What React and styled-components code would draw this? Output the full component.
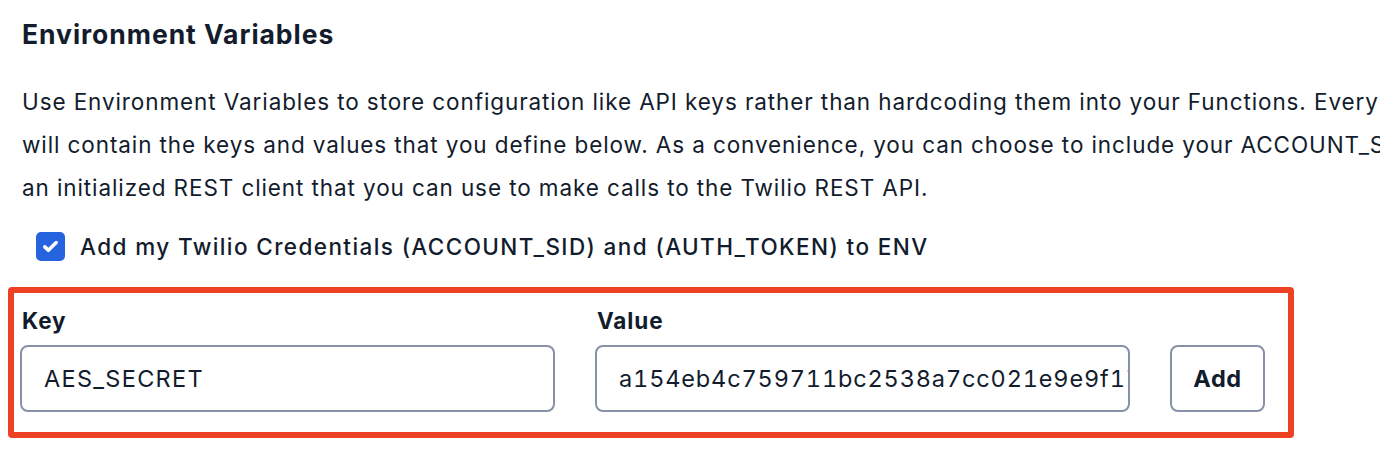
import styled, { createGlobalStyle } from "styled-components";

const GlobalStyle = createGlobalStyle`
  html, body {
    margin: 0;
    padding: 0;
    background: #ffffff;
  }
  body {
    font-family: Inter, "Noto Sans", "Liberation Sans", sans-serif;
    color: #121c2d;
    overflow: hidden;
  }
`;

const Page = styled.div`
  width: 1380px;
  height: 450px;
  overflow: hidden;
  padding: 16px 0 0 0;
  box-sizing: border-box;
`;

const Section = styled.div`
  padding-left: 22px;
`;

const Heading = styled.h2`
  margin: 0;
  font-size: 26.5px;
  font-weight: 700;
  line-height: 36px;
  letter-spacing: 0.95px;
`;

const Paragraph = styled.p`
  margin: 28px 0 0 0;
  font-size: 22.5px;
  line-height: 43px;
  letter-spacing: 0.9px;
  width: 1600px;
  white-space: nowrap;
`;

const CheckRow = styled.label`
  display: flex;
  align-items: center;
  gap: 15px;
  margin: 22px 0 0 14px;
  height: 30px;
  font-size: 22.5px;
  font-weight: 500;
  letter-spacing: 1.4px;
`;

const CheckBox = styled.span`
  width: 29px;
  height: 29px;
  border-radius: 5px;
  background: #2563df;
  display: flex;
  align-items: center;
  justify-content: center;
`;

const Highlight = styled.div`
  margin: 26px 0 0 8px;
  width: 1286px;
  border: 6px solid #ee4124;
  border-radius: 4px;
  box-sizing: border-box;
  display: flex;
  align-items: flex-end;
  gap: 40px;
  padding: 14px 0 20px 6px;
`;

const Field = styled.div`
  display: flex;
  flex-direction: column;
  gap: 10px;
  width: 535px;
`;

const Label = styled.div`
  font-size: 22.5px;
  font-weight: 700;
  line-height: 28px;
  letter-spacing: 0.9px;
  padding-left: 2px;
`;

const Input = styled.div`
  height: 67px;
  box-sizing: border-box;
  border: 2px solid #8891aa;
  border-radius: 8px;
  padding: 0 22px;
  display: flex;
  align-items: center;
  font-size: 23.5px;
  letter-spacing: ${(props) => (props.$hex ? "0.85px" : "1.3px")};
  font-variant-numeric: tabular-nums;
  white-space: nowrap;
  overflow: hidden;
`;

const Button = styled.button`
  width: 95px;
  height: 67px;
  box-sizing: border-box;
  border: 2px solid #8891aa;
  border-radius: 8px;
  background: #ffffff;
  font-family: inherit;
  font-size: 23.5px;
  font-weight: 700;
  letter-spacing: 0.6px;
  color: #121c2d;
`;

export default function App() {
  return (
    <>
      <GlobalStyle />
      <Page>
        <Section>
          <Heading>Environment Variables</Heading>
          <Paragraph>
            Use Environment Variables to store configuration like API keys rather than hardcoding them into your Functions. Every Function
            <br />
            will contain the keys and values that you define below. As a convenience, you can choose to include your ACCOUNT_SID and
            <br />
            an initialized REST client that you can use to make calls to the Twilio REST API.
          </Paragraph>
          <CheckRow>
            <CheckBox>
              <svg width="19" height="19" viewBox="0 0 16 16">
                <path d="M3.2 8.3l3 2.9 6.6-6.5" fill="none" stroke="#fff" strokeWidth="3" strokeLinecap="round" strokeLinejoin="round" />
              </svg>
            </CheckBox>
            Add my Twilio Credentials (ACCOUNT_SID) and (AUTH_TOKEN) to ENV
          </CheckRow>
        </Section>
        <Highlight>
          <Field>
            <Label>Key</Label>
            <Input>AES_SECRET</Input>
          </Field>
          <Field>
            <Label>Value</Label>
            <Input $hex>a154eb4c759711bc2538a7cc021e9e9f17c6d1</Input>
          </Field>
          <Button>Add</Button>
        </Highlight>
      </Page>
    </>
  );
}
